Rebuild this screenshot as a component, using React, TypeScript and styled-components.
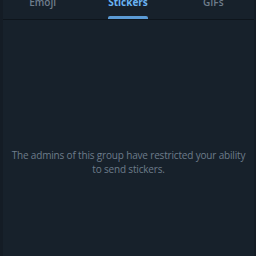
import React from "react";
import styled, { createGlobalStyle } from "styled-components";

const Global = createGlobalStyle`
  html, body { margin: 0; padding: 0; background: #17212b; }
  body { font-family: "Open Sans", "Noto Sans", sans-serif; }
`;

const Panel = styled.div`
  width: 256px;
  height: 256px;
  box-sizing: border-box;
  background: #17212b;
  border-left: 3px solid #141c25;
  border-right: 2px solid #141c25;
  display: flex;
  flex-direction: column;
  overflow: hidden;
`;

const Tabs = styled.div`
  display: grid;
  grid-template-columns: repeat(3, 1fr);
  margin-top: -6px;
  border-bottom: 1px solid #0e151c;
  margin-left: -3px;
  margin-right: -2px;
`;

const Tab = styled.div<{ $active?: boolean }>`
  position: relative;
  text-align: center;
  font-size: 10px;
  font-weight: ${(p) => (p.$active ? 700 : 600)};
  color: ${(p) => (p.$active ? "#6ab3f3" : "#6f7d8b")};
  height: 25px;
  line-height: 16px;
  display: flex;
  justify-content: center;
`;

const Underline = styled.span`
  position: absolute;
  bottom: 0;
  left: 50%;
  transform: translateX(-50%);
  width: 40px;
  height: 3px;
  border-radius: 2px 2px 0 0;
  background: #5b9bd5;
`;

const Body = styled.div`
  flex: 1;
  display: flex;
  align-items: center;
  justify-content: center;
  padding-top: 48px;
`;

const Message = styled.p`
  margin: 0;
  text-align: center;
  font-size: 10px;
  letter-spacing: -0.17px;
  line-height: 14px;
  white-space: nowrap;
  color: #6d7c8a;
`;

export default function App() {
  return (
    <>
      <Global />
      <Panel>
        <Tabs>
          <Tab>Emoji</Tab>
          <Tab $active>
            Stickers
            <Underline />
          </Tab>
          <Tab>GIFs</Tab>
        </Tabs>
        <Body>
          <Message>
            The admins of this group have restricted your ability
            <br />
            to send stickers.
          </Message>
        </Body>
      </Panel>
    </>
  );
}
